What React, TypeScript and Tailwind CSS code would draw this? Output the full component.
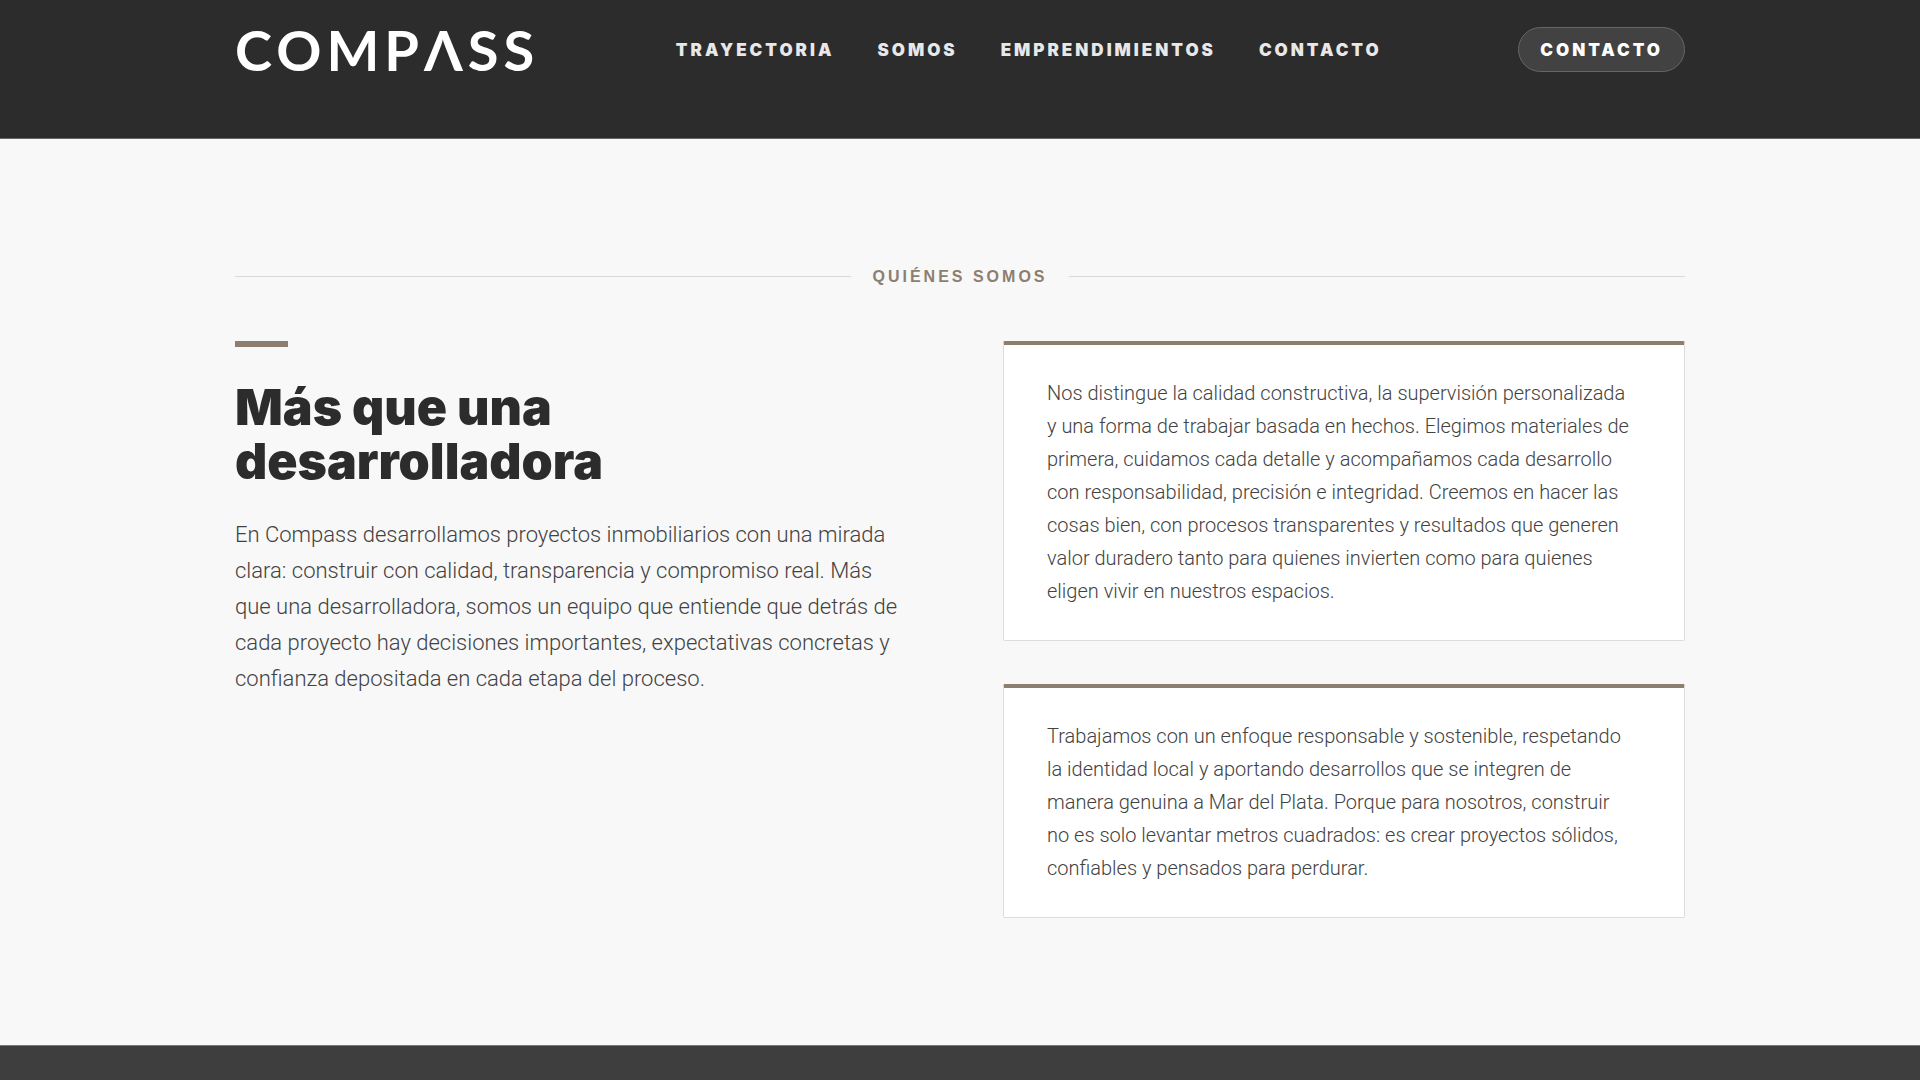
const navLinks = [
  { label: 'Trayectoria', href: '#trayectoria' },
  { label: 'Somos', href: '#somos' },
  { label: 'Emprendimientos', href: '#emprendimientos' },
  { label: 'Contacto', href: '#contacto' },
];

const cards = [
  'Nos distingue la calidad constructiva, la supervisión personalizada y una forma de trabajar basada en hechos. Elegimos materiales de primera, cuidamos cada detalle y acompañamos cada desarrollo con responsabilidad, precisión e integridad. Creemos en hacer las cosas bien, con procesos transparentes y resultados que generen valor duradero tanto para quienes invierten como para quienes eligen vivir en nuestros espacios.',
  'Trabajamos con un enfoque responsable y sostenible, respetando la identidad local y aportando desarrollos que se integren de manera genuina a Mar del Plata. Porque para nosotros, construir no es solo levantar metros cuadrados: es crear proyectos sólidos, confiables y pensados para perdurar.',
];

function Header() {
  return (
    <header className="border-b border-[#666] bg-[#2c2c2c] pt-[27px] pb-[66px]">
      <div className="mx-auto flex max-w-[1450px] items-center justify-between">
        <a href="#" aria-label="Compass" className="font-['Lato',sans-serif] text-[56px] leading-[42px] font-bold tracking-[5px] text-white">
          COMPΛSS
        </a>
        <nav className="flex gap-[43px]">
          {navLinks.map((link) => (
            <a
              key={link.label}
              href={link.href}
              className="font-['Inter',sans-serif] text-[17px] leading-6 font-black tracking-[3px] text-[#e8e8e8] uppercase"
            >
              {link.label}
            </a>
          ))}
        </nav>
        <a
          href="#contacto"
          className="flex h-[45px] items-center rounded-full border border-[#666] bg-[#424242] px-[21px] font-['Inter',sans-serif] text-[17px] leading-6 font-black tracking-[3px] text-white uppercase"
        >
          Contacto
        </a>
      </div>
    </header>
  );
}

function SectionTitle() {
  return (
    <div className="flex items-center gap-[21px]">
      <span className="h-px flex-1 bg-[#d9d9d9]" />
      <p className="font-['Liberation_Sans',Arial,sans-serif] text-base leading-[25px] font-bold tracking-[3px] text-[#8c7f70] uppercase">
        Quiénes somos
      </p>
      <span className="h-px flex-1 bg-[#d9d9d9]" />
    </div>
  );
}

export default function App() {
  return (
    <div className="min-h-screen bg-[#3e3e3e] font-['Roboto',sans-serif]">
      <Header />
      <main id="somos" className="bg-[#f8f8f8] pt-[125px] pb-[127px]">
        <div className="mx-auto max-w-[1450px]">
          <SectionTitle />
          <div className="mt-[52px] grid grid-cols-2 gap-[86px]">
            <div>
              <div className="h-[6px] w-[53px] bg-[#8c7f70]" />
              <h1 className="mt-[33px] max-w-[480px] font-['Inter',sans-serif] text-[50px] leading-[54px] font-black text-[#2c2c2c]">
                Más que una desarrolladora
              </h1>
              <p className="mt-[29px] max-w-[675px] text-[22px] leading-[36px] font-light text-[#424242]">
                En Compass desarrollamos proyectos inmobiliarios con una mirada clara: construir con calidad, transparencia y compromiso real. Más que una desarrolladora, somos un equipo que entiende que detrás de cada proyecto hay decisiones importantes, expectativas concretas y confianza depositada en cada etapa del proceso.
              </p>
            </div>
            <div className="flex flex-col gap-[43px]">
              {cards.map((text) => (
                <article
                  key={text}
                  className="rounded-xs border border-t-4 border-[#dcdcdc] border-t-[#8c7f70] bg-white py-8 pr-[50px] pl-[43px]"
                >
                  <p className="text-xl leading-[33px] font-light text-[#424242]">{text}</p>
                </article>
              ))}
            </div>
          </div>
        </div>
      </main>
      <footer className="border-t border-[#777]" />
    </div>
  );
}
